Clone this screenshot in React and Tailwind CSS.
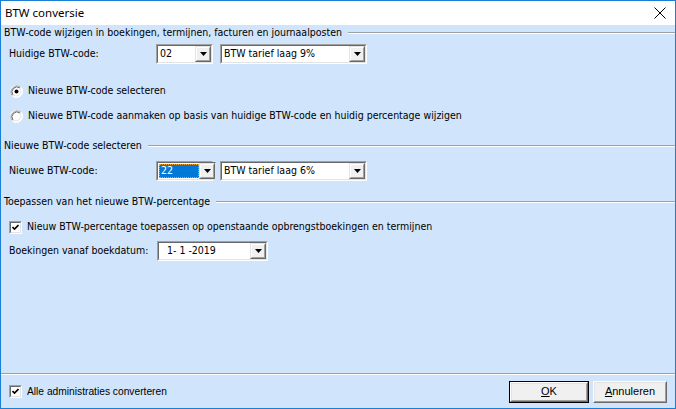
import React from "react";

const F = "font-['DejaVu_Sans_Condensed','Liberation_Sans',sans-serif] text-[10.5px]";

function Arrow() {
  return (
    <div className="w-[16px] h-full flex border border-t-[#e3e3e3] border-l-[#e3e3e3] border-b-[#696969] border-r-[#696969]">
      <div className="flex-1 flex items-center justify-center bg-[#f0f0f0] border border-t-white border-l-white border-b-[#a0a0a0] border-r-[#a0a0a0]">
        <svg width="7" height="4" viewBox="0 0 7 4"><polygon points="0,0 7,0 3.5,4" fill="#000" /></svg>
      </div>
    </div>
  );
}

function Combo({ className, children }) {
  return (
    <div className={"flex h-[20px] border border-t-[#a0a0a0] border-l-[#a0a0a0] border-b-white border-r-white " + className}>
      <div className="flex-1 flex border border-t-[#696969] border-l-[#696969] border-b-[#e3e3e3] border-r-[#e3e3e3] bg-white">
        <div className="flex-1 flex items-center min-w-0">{children}</div>
        <Arrow />
      </div>
    </div>
  );
}

function Header({ children }) {
  return (
    <div className="h-[16px] flex items-center pl-[3px]">
      <span className="whitespace-nowrap">{children}</span>
      <div className="flex-1 ml-[6px] h-[2px] border-t border-t-[#a0a0a0] border-b border-b-white" />
    </div>
  );
}

function Radio({ checked }) {
  return (
    <svg width="13" height="13" viewBox="0 0 13 13">
      <circle cx="6.5" cy="6.5" r="6" fill="#fff" stroke="#ffffff" />
      <path d="M 2.3 10.7 A 6 6 0 0 1 10.7 2.3" fill="none" stroke="#a0a0a0" />
      <path d="M 3 10 A 5 5 0 0 1 10 3" fill="none" stroke="#696969" />
      <path d="M 10.7 2.3 A 6 6 0 0 1 2.3 10.7" fill="none" stroke="#ffffff" />
      <path d="M 10 3 A 5 5 0 0 1 3 10" fill="none" stroke="#e3e3e3" />
      {checked && <circle cx="6.5" cy="6.5" r="2" fill="#000" />}
    </svg>
  );
}

function Check() {
  return (
    <div className="w-[13px] h-[13px] flex border border-t-[#a0a0a0] border-l-[#a0a0a0] border-b-white border-r-white">
      <div className="flex-1 flex items-center justify-center bg-white border border-t-[#696969] border-l-[#696969] border-b-[#e3e3e3] border-r-[#e3e3e3]">
        <svg width="7" height="7" viewBox="0 0 7 7">
          <path d="M0.5 3 L2.5 5 L6.5 1" fill="none" stroke="#000" strokeWidth="1.6" />
        </svg>
      </div>
    </div>
  );
}

function Button({ def, children }) {
  return (
    <div className={"h-[22px] flex " + (def ? "border border-black w-[80px]" : "w-[74px]")}>
      <div className="flex-1 flex border border-t-white border-l-white border-b-[#696969] border-r-[#696969]">
        <div className="flex-1 flex items-center justify-center bg-[#f0f0f0] border border-t-[#e3e3e3] border-l-[#e3e3e3] border-b-[#a0a0a0] border-r-[#a0a0a0] font-['Liberation_Sans',sans-serif] text-[11px]">
          {children}
        </div>
      </div>
    </div>
  );
}

export default function App() {
  return (
    <div className={"w-[676px] h-[409px] border border-[#1a7fd4] flex flex-col bg-[#d0e4fb] text-black overflow-hidden " + F}>
      <div className="h-[24px] bg-white flex items-center justify-between pl-[4px] pr-[9px]">
        <span className="font-['Noto_Sans','Open_Sans',sans-serif] text-[11.5px]">BTW conversie</span>
        <svg width="12" height="12" viewBox="0 0 12 12">
          <path d="M0.5 0.5 L11.5 11.5 M11.5 0.5 L0.5 11.5" stroke="#000" strokeWidth="1" fill="none" />
        </svg>
      </div>

      <div className="flex-1 flex flex-col">
        <Header>BTW-code wijzigen in boekingen, termijnen, facturen en journaalposten</Header>
        <div className="mt-[3px] flex items-center pl-[8px]">
          <span className="w-[147px]">Huidige BTW-code:</span>
          <Combo className="w-[57px]"><span className="pl-[2px]">02</span></Combo>
          <Combo className="w-[147px] ml-[7px]"><span className="pl-[2px]">BTW tarief laag 9%</span></Combo>
        </div>

        <div className="mt-[19px] h-[16px] flex items-center pl-[9px] gap-[5px]">
          <Radio checked />
          <span>Nieuwe BTW-code selecteren</span>
        </div>
        <div className="mt-[9px] h-[16px] flex items-center pl-[9px] gap-[5px]">
          <Radio />
          <span>Nieuwe BTW-code aanmaken op basis van huidige BTW-code en huidig percentage wijzigen</span>
        </div>

        <div className="mt-[14px]">
          <Header>Nieuwe BTW-code selecteren</Header>
        </div>
        <div className="mt-[7px] flex items-center pl-[8px]">
          <span className="w-[147px]">Nieuwe BTW-code:</span>
          <Combo className="w-[57px]">
            <div className="h-full w-[41px] py-[1px] pl-[1px]">
              <div className="h-full bg-[#0078d7] text-white border border-dotted border-[#f0a030] flex items-center pl-[1px]">22</div>
            </div>
          </Combo>
          <Combo className="w-[147px] ml-[7px]"><span className="pl-[2px]">BTW tarief laag 6%</span></Combo>
        </div>

        <div className="mt-[13px]">
          <Header>Toepassen van het nieuwe BTW-percentage</Header>
        </div>
        <div className="mt-[9px] h-[16px] flex items-center pl-[8px] gap-[5px]">
          <Check />
          <span>Nieuw BTW-percentage toepassen op openstaande opbrengstboekingen en termijnen</span>
        </div>
        <div className="mt-[6px] flex items-center pl-[8px]">
          <span className="w-[148px]">Boekingen vanaf boekdatum:</span>
          <Combo className="w-[111px]"><span className="pl-[8px]">1- 1 -2019</span></Combo>
        </div>

        <div className="flex-1" />
        <div className="h-[2px] border-t border-t-[#a0a0a0] border-b border-b-white" />
        <div className="h-[33px] flex items-center pl-[8px] pr-[8px]">
          <Check />
          <span className="ml-[5px] inline-block origin-left scale-x-[0.93] whitespace-nowrap font-['Liberation_Sans',sans-serif] text-[11px]">Alle administraties converteren</span>
          <div className="flex-1" />
          <Button def><span><span className="underline">O</span>K</span></Button>
          <div className="w-[4px]" />
          <Button><span><span className="underline">A</span>nnuleren</span></Button>
        </div>
      </div>
    </div>
  );
}
